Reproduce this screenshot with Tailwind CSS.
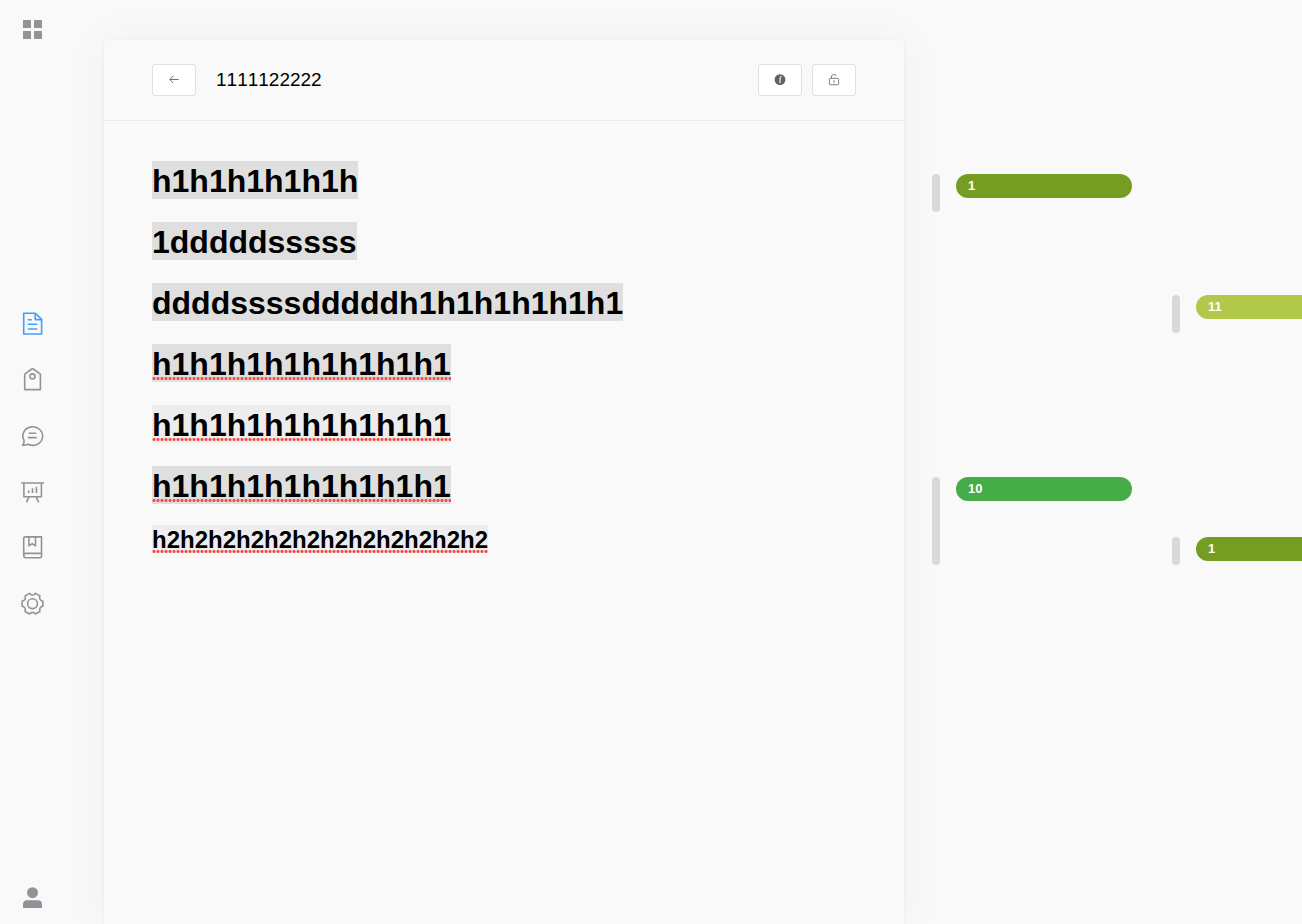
<!DOCTYPE html>
<html lang="en">
<head>
    <meta charset="UTF-8">
    <meta name="viewport" content="width=device-width, initial-scale=1.0">
    <title>1111122222</title>
    <script src="https://cdn.jsdelivr.net/npm/@tailwindcss/browser@4"></script>
</head>
<body class="bg-[#f9f9f9] text-black font-['Helvetica_Neue','Liberation_Sans',Arial,sans-serif]">
    <div class="flex h-screen overflow-hidden">
        <!-- Sidebar -->
        <aside class="flex w-16 shrink-0 flex-col items-center justify-between pt-[18px] pb-[15px] text-[#909399]">
            <a href="#" aria-label="Home">
                <svg class="size-6" viewBox="0 0 24 24" fill="currentColor"><rect x="3" y="2" width="8" height="8" rx=".5"/><rect x="14" y="2" width="8" height="8" rx=".5"/><rect x="3" y="13" width="8" height="8" rx=".5"/><rect x="14" y="13" width="8" height="8" rx=".5"/></svg>
            </a>
            <nav class="flex flex-col gap-8">
                <a href="#" aria-label="Documents" class="text-[#409eff]">
                    <svg class="size-6" viewBox="0 0 24 24" fill="none" stroke="currentColor" stroke-width="1.6" stroke-linejoin="round"><path d="M3.7 1.2H15.4L21.6 7.4V22H3.7Z"/><path d="M15.2 1.4V7.6H21.4M7.8 7.8H11.8M7.8 12.2H17.3M7.8 17H17.3"/></svg>
                </a>
                <a href="#" aria-label="Tags">
                    <svg class="size-6" viewBox="0 0 24 24" fill="none" stroke="currentColor" stroke-width="1.6" stroke-linejoin="round"><path d="M4.7 6.2L11.8 1Q12.5 .6 13.2 1L20.4 6.2V21.6H4.7Z"/><circle cx="12.5" cy="8.4" r="2.5"/></svg>
                </a>
                <a href="#" aria-label="Comments">
                    <svg class="size-6" viewBox="0 0 24 24" fill="none" stroke="currentColor" stroke-width="1.6" stroke-linejoin="round"><path d="M4 16.4A9.9 9.3 0 1 1 8 20.2Q5.8 21.3 2.6 21.2Q4.3 19 4 16.4Z"/><path d="M8.8 9.2H16.3M8 13.6H16.8"/></svg>
                </a>
                <a href="#" aria-label="Boards">
                    <svg class="size-6" viewBox="0 0 24 24" fill="none" stroke="currentColor" stroke-width="1.6"><path d="M1.2 3H24M3.9 3V16.7H21.4V3M9 16.9L6.5 22.3M16.2 16.9L18.7 22.3M8.7 10.4V13M12.5 8.3V13M16.4 6.8V13"/></svg>
                </a>
                <a href="#" aria-label="Library">
                    <svg class="size-6" viewBox="0 0 24 24" fill="none" stroke="currentColor" stroke-width="1.6" stroke-linejoin="round"><path d="M3.7 19.5V2.6Q3.7 .9 5.4 .9H21.5V20.2Q21.5 21.7 20 21.7H5.8Q3.7 21.7 3.7 19.5Q3.7 17.4 5.8 17.4H21.5M8.9 .9V9.8L12.2 7.6L15.5 9.8V.9"/></svg>
                </a>
                <a href="#" aria-label="Settings">
                    <svg class="size-6" viewBox="0 0 24 24" fill="none" stroke="currentColor" stroke-width="1.6" stroke-linejoin="round"><g transform="translate(12.5 11.7)"><path d="M10.4-2.5V2.5L8.7 3.1Q7.2 4.2 7.1 6L7.4 7.8L3 10.3L1.6 9.1Q0 8.2-1.6 9.1L-3 10.3L-7.4 7.8L-7.1 6Q-7.2 4.2-8.7 3.1L-10.4 2.5V-2.5L-8.7-3.1Q-7.2-4.2-7.1-6L-7.4-7.8L-3-10.3L-1.6-9.1Q0-8.2 1.6-9.1L3-10.3L7.4-7.8L7.1-6Q7.2-4.2 8.7-3.1Z"/><circle r="4.9"/></g></svg>
                </a>
            </nav>
            <a href="#" aria-label="Account">
                <svg class="size-6" viewBox="0 0 24 24" fill="currentColor"><circle cx="12.5" cy="7.7" r="5.5"/><path d="M3 23V19.3Q3 15.3 7 15.3H18Q22 15.3 22 19.3V23Z"/></svg>
            </a>
        </aside>

        <!-- Document -->
        <main class="mt-10 ml-10 w-[800px] shrink-0 rounded-t bg-[#f9f9f9] shadow-[0_0_50px_rgba(0,0,0,0.04),0_1px_4px_rgba(0,0,0,0.06)]">
            <header class="flex items-center border-b border-[#ebebeb] px-12 py-6">
                <button type="button" aria-label="Back" class="flex h-8 w-11 items-center justify-center rounded-[3px] border border-[#dcdfe6] bg-white text-[#606266]">
                    <svg class="size-3" viewBox="0 0 12 12" fill="none" stroke="currentColor" stroke-width=".9"><path d="M10.700 5.500H2M5.200 1.900L1.800 5.500L5.200 9.100"/></svg>
                </button>
                <h1 class="ml-5 flex-1 text-[19px] leading-8 [font-kerning:none]">1111122222</h1>
                <div class="flex gap-[10px]">
                    <button type="button" aria-label="Info" class="flex h-8 w-11 items-center justify-center rounded-[3px] border border-[#dcdfe6] bg-white text-[#606266]">
                        <svg class="size-3" viewBox="0 0 12 12"><circle cx="6" cy="5.600" r="5.400" fill="currentColor"/><path d="M5 4.700H6.500L5.600 8.300H6.800" fill="none" stroke="#fff" stroke-width="1"/><circle cx="6.700" cy="2.900" r=".8" fill="#fff"/></svg>
                    </button>
                    <button type="button" aria-label="Unlock" class="flex h-8 w-11 items-center justify-center rounded-[3px] border border-[#dcdfe6] bg-white text-[#606266]">
                        <svg class="size-3" viewBox="0 0 12 12" fill="none" stroke="currentColor" stroke-width=".8"><rect x="1.400" y="4.400" width="9.200" height="6.300" rx=".8"/><path d="M3.300 4.300V3A2.700 2.600 0 0 1 8.500 2.100M6 6.200V8.900"/></svg>
                    </button>
                </div>
            </header>

            <article class="px-12 pt-10">
                <div class="space-y-[23px] text-[32px] leading-10 font-bold">
                    <h2 class="h-[38px] w-fit bg-[#dfdfdf]">h1h1h1h1h1h</h2>
                    <h2 class="h-[38px] w-fit bg-[#dfdfdf]">1dddddsssss</h2>
                    <h2 class="h-[38px] w-fit bg-[#dfdfdf]">ddddssssdddddh1h1h1h1h1h1</h2>
                    <h2 class="h-[38px] w-fit bg-[#dfdfdf] bg-[radial-gradient(circle,#f0483e_1px,transparent_2px)] bg-[length:4px_3px] bg-[position:0_33px] bg-repeat-x">h1h1h1h1h1h1h1h1</h2>
                    <h2 class="h-[38px] w-fit bg-[#ededed] bg-[radial-gradient(circle,#f0483e_1px,transparent_2px)] bg-[length:4px_3px] bg-[position:0_33px] bg-repeat-x">h1h1h1h1h1h1h1h1</h2>
                    <h2 class="h-[38px] w-fit bg-[#dfdfdf] bg-[radial-gradient(circle,#f0483e_1px,transparent_2px)] bg-[length:4px_3px] bg-[position:0_33px] bg-repeat-x">h1h1h1h1h1h1h1h1</h2>
                </div>
                <h3 class="mt-[21px] h-7 w-fit bg-[#ededed] bg-[radial-gradient(circle,#f0483e_1px,transparent_2px)] bg-[length:4px_3px] bg-[position:0_25px] bg-repeat-x text-2xl leading-[30px] font-bold">h2h2h2h2h2h2h2h2h2h2h2h2</h3>
            </article>
        </main>

        <!-- Code tracks -->
        <section class="ml-7 flex shrink-0 gap-10 text-[13px] leading-6 font-bold text-white">
            <div class="w-[200px]">
                <div class="mt-[174px] flex h-[38px] gap-4">
                    <div class="w-2 rounded-full bg-[#d9d9d9]"></div>
                    <div class="h-6 flex-1 rounded-full bg-[#759d22] px-3">1</div>
                </div>
                <div class="mt-[265px] flex h-[88px] gap-4">
                    <div class="w-2 rounded-full bg-[#d9d9d9]"></div>
                    <div class="h-6 flex-1 rounded-full bg-[#46ac47] px-3">10</div>
                </div>
            </div>
            <div class="w-[200px]">
                <div class="mt-[295px] flex h-[38px] gap-4">
                    <div class="w-2 rounded-full bg-[#d9d9d9]"></div>
                    <div class="h-6 flex-1 rounded-full bg-[#b2c84b] px-3">11</div>
                </div>
                <div class="mt-[204px] flex h-7 gap-4">
                    <div class="w-2 rounded-full bg-[#d9d9d9]"></div>
                    <div class="h-6 flex-1 rounded-full bg-[#759d22] px-3">1</div>
                </div>
            </div>
        </section>
    </div>
</body>
</html>
